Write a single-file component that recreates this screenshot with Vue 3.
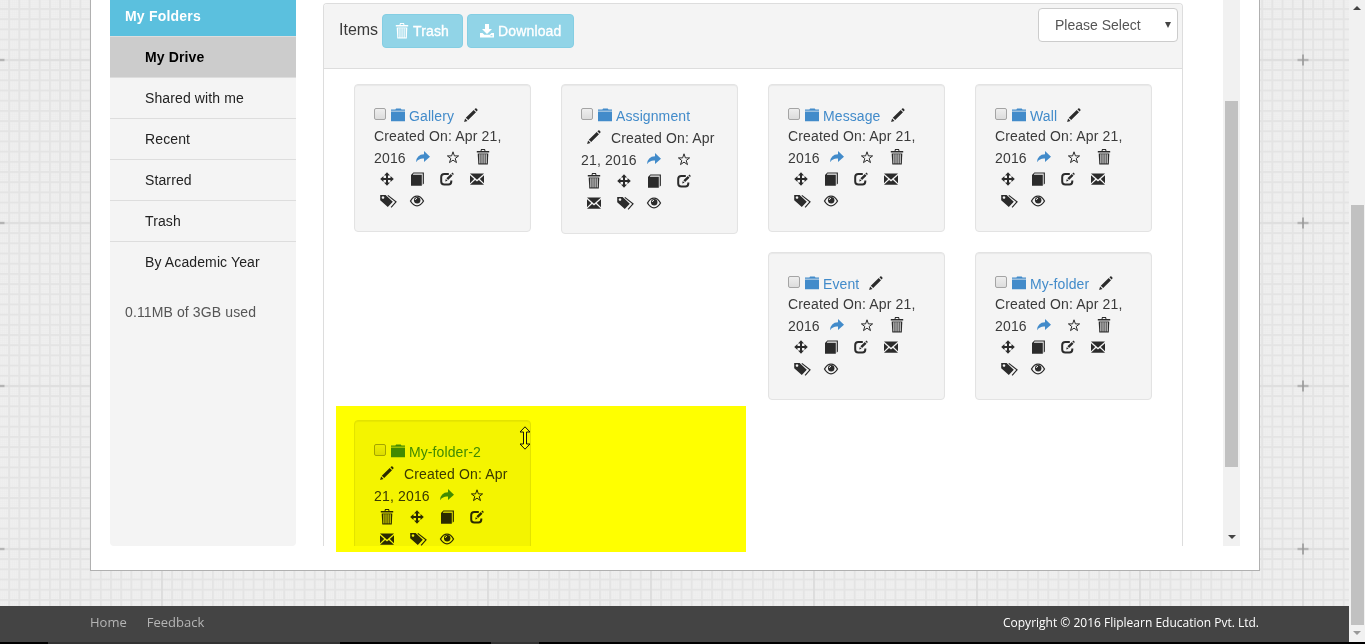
<script setup>
const nav = ['My Drive', 'Shared with me', 'Recent', 'Starred', 'Trash', 'By Academic Year']

const icons = {
  folder: '<path d="M0 2.7V1.5h4.4L5.1.5h4.6l.8 1H14v1.2zM0 3.5h14v9.7H0z"/>',
  pencil: '<path d="M.1 13.9l1-3.4 2.4 2.4zM1.8 9.7L9.7 2l2.3 2.3-7.8 7.8zM10.4 1.3l.9-.8q.7-.5 1.2.1l.9 1q.4.6-.1 1.1l-.7.9z"/>',
  share: '<path d="M0 12.2Q.5 4.6 8 4.3V1l6 5.8-6 5.1V8.5Q3 8 0 12.2z"/>',
  star: '<path d="M7 1.8l1.4 4.1h4.2L9.2 8.5l1.3 4.1L7 10.1l-3.5 2.5 1.3-4.1-3.4-2.6h4.2z" fill="none" stroke="currentColor" stroke-width="1"/>',
  trash: '<path d="M.8 1h3.7L5-.9h4l.5 1.9h3.7v1.4H.8zM5.5 1h3L8.2 0H5.8z" fill-rule="evenodd"/><path d="M1.7 3.4h10.6l-.5 11.2H2.3z"/><path d="M3.9 4.2v9.2M6 4.2v9.2M8.1 4.2v9.2M10.2 4.2v9.2" stroke="var(--slot,#f4f4f4)" stroke-width="1"/>',
  move: '<path d="M7 .2l3 3.2H8v2.5h2.5V4l3.3 3-3.3 3V8.1H8v2.5h2l-3 3.2-3-3.2h2V8.1H3.5V10L.2 7l3.3-3v1.9H6V3.4H4z"/>',
  copy: '<path d="M1 3L3.4.4h10.5v11.2l-1.2 1.2V1.5H3.5l-.7 1.3h9v11H1z"/>',
  edit: '<path d="M8.8 2.1H4.3Q1.2 2.1 1.2 5v4.6q0 2.9 3.1 2.9h4.1q2.9 0 2.9-2.9V8.6" fill="none" stroke="currentColor" stroke-width="2"/><path d="M5.2 9.4l.6-2.4 1.8 1.8zM6.4 6.3l4.4-4.3 1.7 1.7-4.4 4.4zM11.4 1.4l1-.9 1.5 1.6-.9.9z"/>',
  mail: '<path d="M0 1.6h14L7 7.8zM0 3.2l4.2 3.9L0 11.2zM14 3.2L9.8 7.1l4.2 4.1zM0 12.8l5.1-4.9L7 9.6l1.9-1.7 5.1 4.9z"/>',
  tags: '<path d="M.2 1h5.4l7.2 6.7-5 5.3L.2 6.3zM3 2.2a1.3 1.3 0 1 0 .01 0z" fill-rule="evenodd"/><path d="M7.8 1.4l8.2 6.5-4.9 5.4" fill="none" stroke="currentColor" stroke-width="1.2"/>',
  eye: '<path d="M.5 7Q3.2 2.2 7 2.2T13.5 7Q10.8 11.8 7 11.8T.5 7z" fill="none" stroke="currentColor" stroke-width="1.3"/><circle cx="7.2" cy="6.2" r="3.2"/><path d="M5.4 6q.1-1.6 1.6-1.7" stroke="#f4f4f4" stroke-width=".9" fill="none"/>',
  download: '<path d="M5 0h4v5h3L7 10 2 5h3zM0 9h2.5l1.8 1.8h5.4L11.5 9H14v4.6H0zM10.5 11.3v1h2v-1z" fill-rule="evenodd"/>'
}

const shortRows = [
  { text: 'Created On: Apr 21,', tight: true },
  { text: '2016', icons: ['share', 'star', 'trash'] },
  { icons: ['move', 'copy', 'edit', 'mail'] },
  { icons: ['tags', 'eye'] }
]
const longRows = [
  { lead: 'pencil', text: 'Created On: Apr' },
  { text: '21, 2016', icons: ['share', 'star'] },
  { icons: ['trash', 'move', 'copy', 'edit'] },
  { icons: ['mail', 'tags', 'eye'] }
]
const cards = [
  { name: 'Gallery', rows: shortRows, pencil: true },
  { name: 'Assignment', rows: longRows },
  { name: 'Message', rows: shortRows, pencil: true },
  { name: 'Wall', rows: shortRows, pencil: true },
  { name: 'Event', rows: shortRows, pencil: true, place: 'third' },
  { name: 'My-folder', rows: shortRows, pencil: true },
  { name: 'My-folder-2', rows: longRows, place: 'newline' }
]
</script>

<template>
  <div class="page">
    <div class="view">
      <div class="stage">
        <svg class="paper" aria-hidden="true">
          <defs>
            <pattern id="fine" width="2.0375" height="2.0375" patternUnits="userSpaceOnUse">
              <path d="M0 .5H3M.5 0V3" stroke="#ebebeb" stroke-width=".5" />
            </pattern>
            <pattern id="minor" x="-2" y="59" width="10.1875" height="10.1875" patternUnits="userSpaceOnUse">
              <path d="M0 .9H11M.9 0V11" stroke="#e4e4e4" stroke-width="1.8" />
            </pattern>
            <pattern id="major" x="-83" y="-22.5" width="163" height="163" patternUnits="userSpaceOnUse">
              <path d="M0 82.5H163M82 0V163" stroke="#dcdcdc" stroke-width="1.5" />
              <path d="M76.5 82.5H87.5M82 77V88" stroke="#999" stroke-width="1.6" />
            </pattern>
          </defs>
          <rect width="100%" height="100%" fill="#efefef" />
          <rect width="100%" height="100%" fill="url(#fine)" />
          <rect width="100%" height="100%" fill="url(#minor)" />
          <rect width="100%" height="100%" fill="url(#major)" />
        </svg>
        <main class="sheet">
          <aside class="side">
            <h2>My Folders</h2>
            <ul>
              <li v-for="(n, i) in nav" :key="n" :class="{ active: i === 0 }">{{ n }}</li>
            </ul>
            <p>0.11MB of 3GB used</p>
          </aside>
          <section class="panel">
            <header class="bar">
              <span class="title">Items</span>
              <button class="btn"><svg class="ico" viewBox="0 0 14 14" v-html="icons.trash"></svg>Trash</button>
              <button class="btn"><svg class="ico" viewBox="0 0 14 14" v-html="icons.download"></svg>Download</button>
              <div class="select"><span>Please Select</span><i></i></div>
            </header>
            <div class="grid">
              <article v-for="c in cards" :key="c.name" class="card" :class="c.place">
                <div class="row first">
                  <span class="check"></span>
                  <svg class="ico folder" viewBox="0 0 14 14" v-html="icons.folder"></svg>
                  <a>{{ c.name }}</a>
                  <svg v-if="c.pencil" class="ico pen" viewBox="0 0 14 14" v-html="icons.pencil"></svg>
                </div>
                <div v-for="(r, i) in c.rows" :key="i" class="row" :class="{ tight: r.tight }">
                  <svg v-if="r.lead" class="ico lead" viewBox="0 0 14 14" v-html="icons[r.lead]"></svg>
                  <span v-if="r.text" class="words">{{ r.text }}</span>
                  <div v-if="r.icons" class="tools" :class="{ after: r.text }">
                    <svg v-for="k in r.icons" :key="k" class="ico" :class="k" viewBox="0 0 14 14" v-html="icons[k]"></svg>
                  </div>
                </div>
              </article>
            </div>
          </section>
          <div class="inner-scroll"><div class="thumb"></div><i class="down"></i></div>
        </main>
      </div>
      <footer>
        <nav><a>Home</a><a>Feedback</a></nav>
        <span>Copyright © 2016 Fliplearn Education Pvt. Ltd.</span>
      </footer>
    </div>
    <div class="outer-scroll"><i class="up"></i><div class="thumb"></div><i class="down"></i></div>
    <div class="strip"></div>
    <div class="marker"></div>
    <svg class="cursor" viewBox="0 0 12 24"><path d="M6 .8L11 6H7.5v12H11L6 23.2 1 18h3.5V6H1z" fill="#ff0" stroke="#111" /></svg>
  </div>
</template>

<style>
body { margin: 0; overflow: hidden; }
</style>
<style scoped>
* { box-sizing: border-box; }
.page { position: relative; display: flex; flex-wrap: wrap; width: 1365px; height: 644px; overflow: hidden; font: 14px/20px "Liberation Sans", Arial, sans-serif; color: #3a3a3a; background: #efefef; }
.view { width: 1349px; height: 642px; display: flex; flex-direction: column; }
.stage { position: relative; height: 606px; }
.paper { position: absolute; inset: 0; width: 100%; height: 100%; }
.sheet { position: relative; width: 1170px; height: 571px; margin-left: 90px; padding: 0 19px; display: flex; background: #fff; border: 1px solid #b0b0b0; border-top: 0; }
.side { width: 186px; height: 546px; background: #f4f4f4; border-radius: 0 0 4px 4px; letter-spacing: .12px; }
.side h2 { margin: 0; height: 36px; padding: 6px 15px 0; font-size: 14px; line-height: 20px; color: #fff; background: #5bc0de; letter-spacing: .2px; }
.side ul { margin: 0; padding: 0; list-style: none; }
.side li { height: 41px; padding: 10px 0 0 35px; line-height: 20px; border-top: 1px solid #ddd; color: #222; }
.side li.active { background: #ccc; color: #000; font-weight: bold; }
.side p { margin: 20px 0 0 15px; color: #555; }
.panel { width: 860px; height: 543px; margin: 3px 0 0 27px; border: 1px solid #ddd; border-bottom: 0; border-radius: 4px 4px 0 0; overflow: hidden; }
.bar { height: 65px; display: flex; align-items: flex-start; padding: 4px 4px 0 15px; background: #f4f4f4; border-bottom: 1px solid #ddd; }
.title { font-size: 16px; line-height: 20px; margin-top: 12px; width: 43px; }
.btn { --slot: #91d4e7; height: 34px; margin: 6px 4px 0 0; padding: 0 12px; display: flex; align-items: center; gap: 4px; font: 14px/20px "Liberation Sans", Arial, sans-serif; letter-spacing: .15px; -webkit-text-stroke: .35px #fff; color: #fff; background: #91d4e7; border: 1px solid #84cee3; border-radius: 4px; }
.btn:first-of-type { width: 81px; }
.btn:nth-of-type(2) { width: 107px; }
.select { width: 140px; height: 34px; margin-left: auto; padding: 0 6px 0 16px; display: flex; align-items: center; justify-content: space-between; background: #fff; color: #555; border: 1px solid #ccc; border-radius: 4px; }
.select i { border: 3.5px solid transparent; border-top: 6px solid #444; border-bottom: 0; }
.grid { display: grid; grid-template-columns: repeat(4, 177px); grid-template-rows: repeat(3, 150px); gap: 18px 30px; align-items: start; padding: 15px 30px 0; }
.card { padding: 19px; background: #f4f4f4; border: 1px solid #e3e3e3; border-radius: 4px; box-shadow: inset 0 1px 1px rgba(0, 0, 0, .05); }
.third { grid-column-start: 3; }
.newline { grid-column-start: 1; }
.row { height: 22px; display: flex; align-items: center; white-space: nowrap; line-height: 20px; letter-spacing: .16px; }
.row.tight { height: 20px; }
.words { padding-top: 2px; }
.tight .words { padding-top: 0; }
.ico { width: 14px; height: 14px; flex: none; fill: currentColor; overflow: visible; }
.card .ico { color: #2b2b2b; }
.check { width: 12px; height: 12px; margin: -1px 5px 1px 0; border: 1px solid #a4a4a4; border-radius: 2px; background: linear-gradient(#eee, #dcdcdc); }
.card .folder, .card .share { color: #428bca; }
.folder { margin-right: 4px; }
.card a { color: #428bca; padding-top: 2px; letter-spacing: .1px; }
.pen { margin-left: 10px; }
.lead { margin: 0 10px 0 6px; }
.tools { display: flex; gap: 16px; margin-left: 6px; }
.tools.after { margin-left: 10px; }
.inner-scroll { width: 17px; height: 546px; margin-left: 40px; background: #f1f1f1; display: flex; flex-direction: column; align-items: center; justify-content: space-between; padding: 101px 0 7px; }
.inner-scroll .thumb { width: 13px; height: 366px; background: #c1c1c1; }
.outer-scroll { width: 16px; height: 642px; background: #f1f1f1; display: flex; flex-direction: column; align-items: center; justify-content: space-between; padding: 6px 0 7px; }
.outer-scroll .thumb { width: 13px; height: 420px; margin-top: 195px; margin-bottom: auto; background: #c1c1c1; }
.up { border: 4px solid transparent; border-top: 0; border-bottom-color: #444; }
.down { border: 4px solid transparent; border-bottom: 0; border-top-color: #444; }
.outer-scroll .down { border-top-color: #999; }
footer { height: 36px; padding: 0 90px 3px; display: flex; justify-content: space-between; align-items: center; background: #444; color: #fff; font: 12px/20px "Open Sans", sans-serif; }
nav { display: flex; gap: 20px; margin-top: -1px; font-size: 13px; color: #b5b5b5; }
.strip { width: 1365px; height: 2px; background: linear-gradient(90deg, #000 48px, #333 48px 340px, #000 340px 491px, #333 491px 539px, #000 539px); }
.marker { position: absolute; left: 336px; top: 406px; width: 410px; height: 146px; background: #ff0; mix-blend-mode: multiply; }
.cursor { position: absolute; left: 519px; top: 426px; width: 12px; height: 24px; }
</style>
